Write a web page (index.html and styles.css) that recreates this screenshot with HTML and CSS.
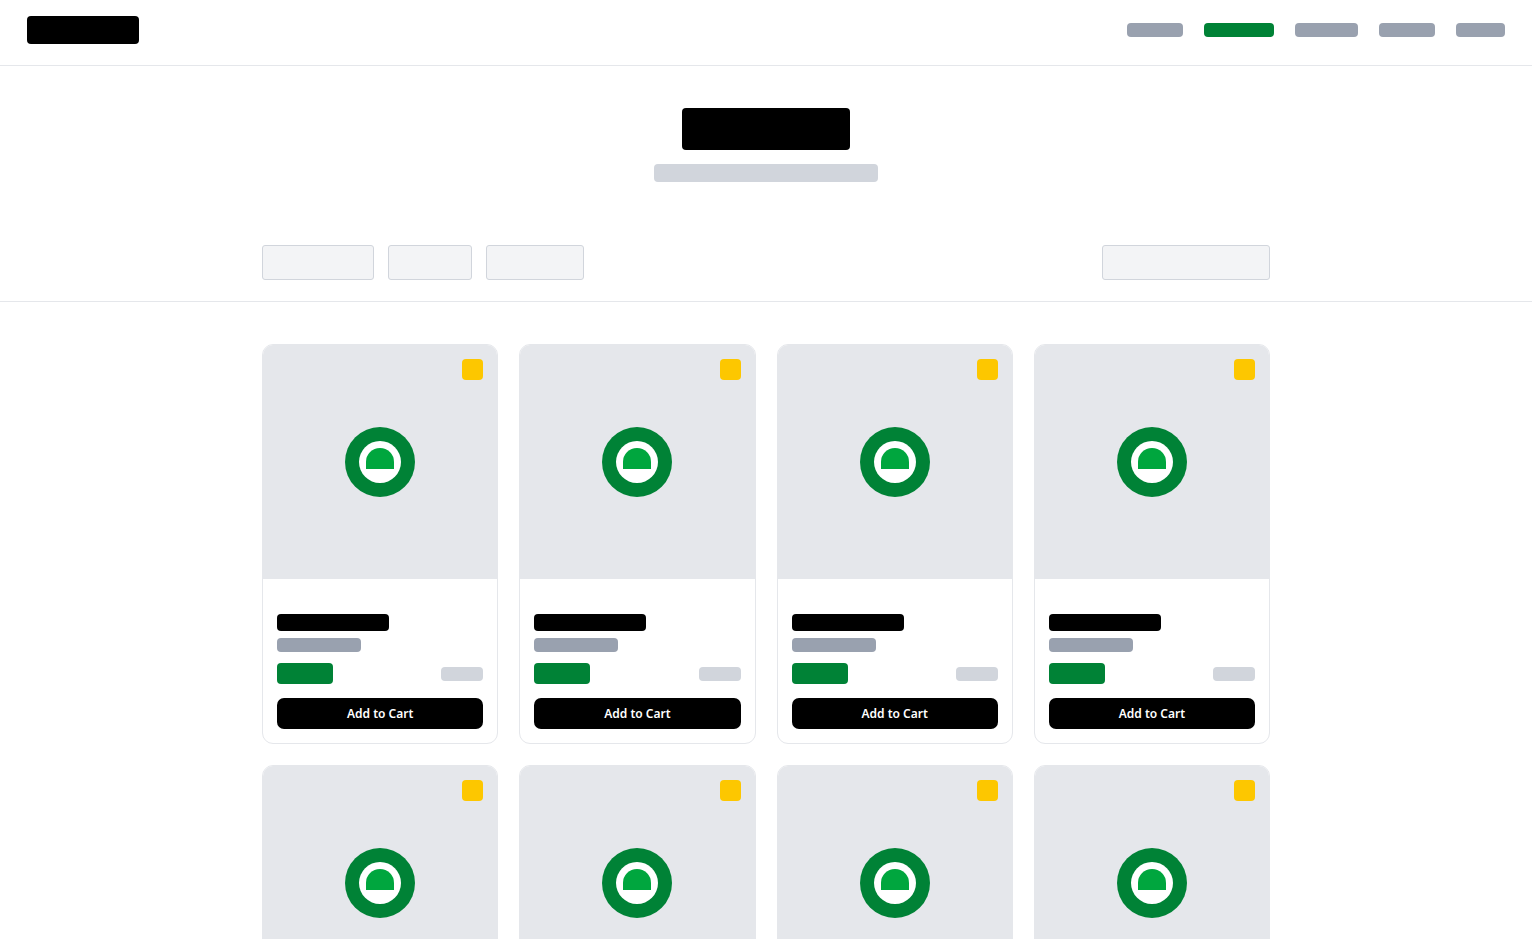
FILE: index.html
```html
<!DOCTYPE html>
<html lang="en">
<head>
<meta charset="utf-8">
<meta name="viewport" content="width=device-width, initial-scale=1">
<title>Shop</title>
<link rel="stylesheet" href="styles.css">
</head>
<body>
<header class="site-header">
  <a class="bar logo" href="#" aria-label="Home"></a>
  <nav class="site-nav" aria-label="Main">
    <a class="bar nav-link nav-md" href="#" aria-label="Section 1"></a>
    <a class="bar nav-link nav-xl nav-current" href="#" aria-label="Section 2" aria-current="page"></a>
    <a class="bar nav-link nav-lg" href="#" aria-label="Section 3"></a>
    <a class="bar nav-link nav-md" href="#" aria-label="Section 4"></a>
    <a class="bar nav-link nav-sm" href="#" aria-label="Section 5"></a>
  </nav>
</header>

<section class="hero">
  <div class="bar hero-title"></div>
  <div class="bar hero-subtitle"></div>
</section>

<section class="toolbar">
  <div class="container toolbar-row">
    <div class="filters">
      <button class="field field-lg" type="button" aria-label="Filter 1"></button>
      <button class="field field-sm" type="button" aria-label="Filter 2"></button>
      <button class="field field-md" type="button" aria-label="Filter 3"></button>
    </div>
    <input class="field field-search" type="text" aria-label="Search">
  </div>
</section>

<main class="container product-grid" id="products"></main>

<template id="product-card">
  <article class="card">
    <div class="card-media">
      <svg class="card-art" viewBox="0 0 70 70" aria-hidden="true">
        <circle cx="35" cy="35" r="35" fill="#008236"/>
        <circle cx="35" cy="35" r="21" fill="#fff"/>
        <path d="M21 42V35a14 14 0 0 1 28 0V42Z" fill="#00a63e"/>
      </svg>
      <span class="bar badge"></span>
    </div>
    <div class="card-body">
      <div class="bar card-title"></div>
      <div class="bar card-subtitle"></div>
      <div class="card-meta">
        <div class="bar price"></div>
        <div class="bar stock"></div>
      </div>
      <button class="cart-button" type="button">Add to Cart</button>
    </div>
  </article>
</template>
<script src="script.js"></script>
</body>
</html>
```

FILE: styles.css
```css
*,
*::before,
*::after {
  box-sizing: border-box;
}

body {
  margin: 0;
  background: #fff;
  color: #000;
  font-family: "Segoe UI", "Noto Sans", "Open Sans", sans-serif;
  font-size: 12px;
  line-height: 17px;
}

.bar {
  display: block;
  border-radius: 4px;
}

.container {
  width: 100%;
  max-width: 1036px;
  margin: 0 auto;
  padding: 0 14px;
}

.site-header {
  display: flex;
  align-items: center;
  justify-content: space-between;
  padding: 16px 27px 21px;
  border-bottom: 1px solid #e5e7eb;
}

.logo {
  width: 112px;
  height: 28px;
  background: #000;
}

.site-nav {
  display: flex;
  gap: 21px;
}

.nav-link {
  height: 14px;
  background: #99a1af;
}

.nav-sm { width: 49px; }
.nav-md { width: 56px; }
.nav-lg { width: 63px; }
.nav-xl { width: 70px; }

.nav-current {
  background: #008236;
}

.hero {
  display: flex;
  flex-direction: column;
  align-items: center;
  gap: 14px;
  padding: 42px 14px;
}

.hero-title {
  width: 168px;
  height: 42px;
  background: #000;
}

.hero-subtitle {
  width: 224px;
  height: 18px;
  background: #d1d5dc;
}

.toolbar {
  padding: 21px 0;
  border-bottom: 1px solid #e5e7eb;
}

.toolbar-row {
  display: flex;
  align-items: center;
  justify-content: space-between;
  gap: 14px;
}

.filters {
  display: flex;
  gap: 14px;
}

.field {
  height: 35px;
  margin: 0;
  padding: 0 10px;
  border: 1px solid #d1d5dc;
  border-radius: 3px;
  background: #f3f4f6;
  font: inherit;
}

.field-sm { width: 84px; }
.field-md { width: 98px; }
.field-lg { width: 112px; }
.field-search { width: 168px; }

.product-grid {
  display: grid;
  grid-template-columns: repeat(auto-fill, minmax(210px, 1fr));
  gap: 21px;
  padding-top: 42px;
  padding-bottom: 42px;
}

.card {
  overflow: hidden;
  border: 1px solid #e5e7eb;
  border-radius: 11px;
  background: #fff;
}

.card-media {
  position: relative;
  display: flex;
  align-items: center;
  justify-content: center;
  aspect-ratio: 1;
  background: #e5e7eb;
}

.card-art {
  width: 70px;
  height: 70px;
}

.badge {
  position: absolute;
  top: 14px;
  right: 14px;
  width: 21px;
  height: 21px;
  background: #fdc700;
}

.card-body {
  padding: 35px 14px 14px;
}

.card-title {
  width: 112px;
  height: 17px;
  margin-bottom: 7px;
  background: #000;
}

.card-subtitle {
  width: 84px;
  height: 14px;
  margin-bottom: 11px;
  background: #99a1af;
}

.card-meta {
  display: flex;
  align-items: center;
  justify-content: space-between;
  margin-bottom: 14px;
}

.price {
  width: 56px;
  height: 21px;
  background: #008236;
}

.stock {
  width: 42px;
  height: 14px;
  background: #d1d5dc;
}

.cart-button {
  display: block;
  width: 100%;
  padding: 7px 14px;
  border: 0;
  border-radius: 7px;
  background: #000;
  color: #fff;
  font: inherit;
  font-weight: 600;
  cursor: pointer;
}
```

FILE: script.js
```js
const grid = document.getElementById("products");
const template = document.getElementById("product-card");
const productCount = 8;

for (let i = 0; i < productCount; i += 1) {
  grid.append(template.content.cloneNode(true));
}
```
